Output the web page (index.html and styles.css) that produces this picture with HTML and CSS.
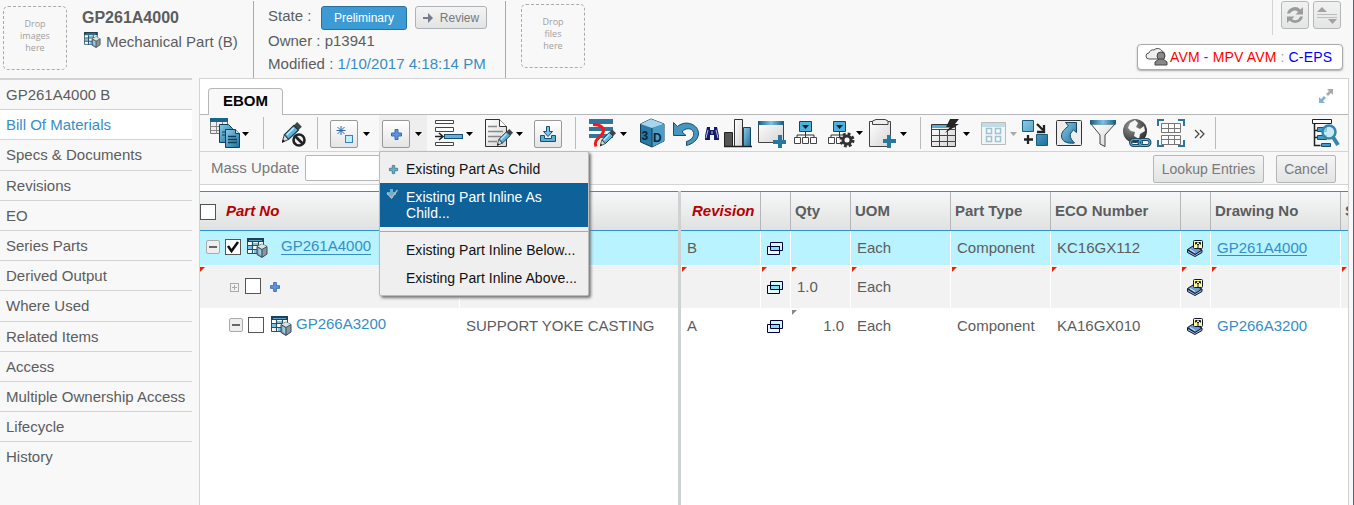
FILE: index.html
```html
<!DOCTYPE html>
<html lang="en">
<head>
<meta charset="utf-8">
<title>GP261A4000</title>
<link rel="stylesheet" href="styles.css">
</head>
<body>
<svg class="defs" width="0" height="0">
  <defs>
    <linearGradient id="blue" x1="0" y1="0" x2="1" y2="1"><stop offset="0" stop-color="#8ccbe8"/><stop offset="1" stop-color="#1d6f9d"/></linearGradient>
    <linearGradient id="bar" x1="0" y1="0" x2="1" y2="0"><stop offset="0" stop-color="#145a80"/><stop offset=".5" stop-color="#7cc4e6"/><stop offset="1" stop-color="#145a80"/></linearGradient>
    <linearGradient id="paper" x1="0" y1="0" x2="1" y2="1"><stop offset="0" stop-color="#fff"/><stop offset="1" stop-color="#d4d4d4"/></linearGradient>
    <radialGradient id="globe" cx=".35" cy=".3" r=".8"><stop offset="0" stop-color="#999"/><stop offset="1" stop-color="#222"/></radialGradient>
    <symbol id="part" viewBox="0 0 21 20"><path d="M.5 .5h16v15H.5z" fill="#fff" stroke="#234f68"/><path d="M0 0h17v4H0z" fill="#1d4256"/><path d="M2 2.500h13" stroke="#58a6cc"/><path d="M1 8h5v3H1zM6 5h5v2H6zM7 12h4v3H7z" fill="#7cc4e6"/><path d="M5.500 4v12M11.500 4v12M0 7.500h17M0 11.500h17" stroke="#234f68" stroke-width="1.200"/><path d="M15 6l5 2.500v7.500l-5 3.500-5-3V8.500z" fill="#8b959b" stroke="#3d4b53"/><path d="M10 8.500L15 6l5 2.500-5 3z" fill="#d7e2e7"/><path d="M11.500 10.500l3 1.500v5.500l-3-2z" fill="#8fd0ee"/><path d="M10 8.500l5 3 5-3M15 11.500v7.500" fill="none" stroke="#3d4b53"/></symbol>
    <symbol id="plus" viewBox="0 0 11 11"><path d="M4 .5h3V4h3.500v3H7v3.500H4V7H.5V4H4z" fill="#5f93e0" stroke="#3c68ac"/></symbol>
    <symbol id="pop" viewBox="0 0 17 14"><path d="M4.500 .5h12v8h-12z" fill="#cff8ff" stroke="#000033"/><path d="M1.500 4.500h12v8h-12z" fill="#e4fbff" stroke="#000033"/><path d="M5 5h8v3H5z" fill="#7fe0ff"/><path d="M4.500 4v4.500H14M4.500 4.500h9v4" fill="none" stroke="#000033"/></symbol>
    <symbol id="book" viewBox="0 0 17 17"><path d="M0.500 9.500L6 6l9 4-6 5z" fill="#6c9bd2" stroke="#101830"/><path d="M.5 10v2.500L8 16.500l7-4V10l-7 4.500z" fill="#8fb4e0" stroke="#101830"/><path d="M3 9.500l5 3" stroke="#def"/><rect x="6.500" y=".5" width="9" height="8" rx="1" fill="#fff899" stroke="#101830"/><path d="M8.500 4.500v-2h2M13.500 4.500v-2h-2M9 3l2 2 2-2M11 5v3" fill="none" stroke="#101830"/></symbol>
    <symbol id="pencil" viewBox="0 0 18 18"><path d="M13 0l4 4-3 3-4-4z" fill="#444"/><path d="M10 3l4 4-8.500 8L2 11z" fill="#5fb2da" stroke="#163746"/><path d="M10 5l-6 6" stroke="#bce5f5" stroke-width="1.500"/><path d="M2 11l3.500 4L0 17.500z" fill="#ddd" stroke="#333" stroke-width=".8"/><path d="M1 15l-1 2.500 2.500-1z" fill="#111"/></symbol>
  </defs>
</svg>

<div class="app">
  <header class="header">
    <div class="identity">
      <div class="drop drop-image">Drop<br>images<br>here</div>
      <div class="title">
        <h1>GP261A4000</h1>
        <p><svg class="type-icon"><use href="#part"/></svg>Mechanical Part (B)</p>
      </div>
    </div>
    <div class="facts">
      <div class="state-row"><span>State :</span><button class="state current">Preliminary</button><button class="state next"><svg width="12" height="10"><path d="M0 5h6" stroke="#777b8b" stroke-width="2"/><path d="M5 0l5 5-5 5z" fill="#777b8b"/></svg>Review</button></div>
      <div class="fact">Owner : p13941</div>
      <div class="fact modified">Modified : <a>1/10/2017 4:18:14 PM</a></div>
    </div>
    <div class="drop drop-file">Drop<br>files<br>here</div>
    <div class="header-right">
      <div class="tools">
        <button class="tool"><svg width="26" height="26"><path d="M5 11.500a8 8 0 0 1 13.500-4L21 5v7.500h-7.500L16 10a5 5 0 0 0-8 1.500zM21 14.500a8 8 0 0 1-13.500 4L5 21v-6.500h7.500L10 17a5 5 0 0 0 8-2.500z" fill="#9b9b9b"/></svg></button>
        <button class="tool"><svg width="26" height="26"><path d="M3 10l5-5 5 5zM14 17h9l-4.500 5z" fill="#a8a09c"/><path d="M3 12.500h20M3 15.500h20" stroke="#bdbdbd"/></svg></button>
      </div>
      <div class="context"><svg width="23" height="20"><path d="M5 12H3a3 3 0 0 1 0-6 4 4 0 0 1 5-3 5 5 0 0 1 8 1 4 4 0 0 1 2 6l-6 2z" fill="#eee" stroke="#555"/><circle cx="15" cy="9" r="4" fill="#888" stroke="#444"/><path d="M9 18v-3l4-3h4l4 3v3z" fill="#888" stroke="#444"/></svg><b>AVM - MPV AVM</b><i> : </i><em>C-EPS</em></div>
    </div>
  </header>

  <div class="body">
    <nav class="side">
      <a>GP261A4000 B</a><a class="active">Bill Of Materials</a><a>Specs &amp; Documents</a><a>Revisions</a><a>EO</a><a>Series Parts</a><a>Derived Output</a><a>Where Used</a><a>Related Items</a><a>Access</a><a>Multiple Ownership Access</a><a>Lifecycle</a><a class="last">History</a>
    </nav>
    <main class="panel">
      <div class="tabs"><span class="tab">EBOM</span><svg class="expand" width="15" height="15"><path d="M8 0h6v6l-2-2-3 3-2-2 3-3z" fill="#aaa"/><path d="M6 14H0V8l2 2 3-3 2 2-3 3z" fill="#85b2d0"/></svg></div>
      <div class="toolbar">
        <svg viewBox="0 0 32 36"><path d="M.5 3.500h17v15H.5z" fill="#eee" stroke="#777"/><path d="M0 3h18v4H0z" fill="#17658c"/><path d="M6.500 7v12M12.500 7v12M0 11.500h18M0 15.500h18" stroke="#888"/><path d="M9.500 9.500h9l4 4v14h-13z" fill="url(#blue)" stroke="#113f59"/><path d="M12 17h4M12 20h4" stroke="#113f59"/><path d="M15.500 14.500h10l4 4v14h-14z" fill="url(#blue)" stroke="#113f59"/><path d="M25.500 14.500v4h4" fill="#cfeaf5" stroke="#113f59"/><path d="M18 21.500h8M18 24.500h9M18 27.500h9" stroke="#113f59" stroke-width="1.500"/></svg>
        <span class="caret"></span><span class="sep"></span>
        <svg viewBox="0 0 24 36"><use href="#pencil" x="0" y="7" width="21" height="21"/><circle cx="17" cy="25" r="5.500" fill="#eee" fill-opacity=".7" stroke="#222" stroke-width="2.600"/><path d="M13 21l8 8" stroke="#222" stroke-width="2.600"/></svg>
        <span class="sep"></span>
        <span class="btn"><svg width="26" height="26"><path d="M10 5v9M5.500 9.500h9M6.500 6l7 7M13.500 6l-7 7" stroke="#2867ae"/><rect x="14.500" y="14.500" width="7" height="7" fill="#bff0ff" stroke="#3a82b4"/></svg></span>
        <span class="caret"></span>
        <span class="open"><span class="btn"><svg width="26" height="26"><use href="#plus" x="8" y="8" width="11" height="11"/></svg></span><span class="caret"></span></span>
        <svg viewBox="0 0 29 36"><path d="M.5 5.500h18v3H.5zM.5 12.500h18v4H.5zM.5 27.500h18v3H.5z" fill="#fff" stroke="#444"/><rect x="9.500" y="19.500" width="18" height="4" fill="#5eb1df" stroke="#174f71"/><path d="M0 21.500h7M4 18l4 3.500L4 25" fill="none" stroke="#222" stroke-width="1.600"/></svg>
        <span class="caret"></span>
        <svg viewBox="0 0 29 36"><path d="M.5 4.500h14l7 7v20H.5z" fill="url(#paper)" stroke="#333"/><path d="M14.500 4.500v7h7" fill="#fff" stroke="#333"/><path d="M3 11.500h9M3 16.500h15M3 21.500h13M3 26.500h9" stroke="#888" stroke-width="1.500"/><use href="#pencil" x="12" y="14" width="17" height="17"/></svg>
        <span class="caret"></span>
        <span class="btn"><svg width="26" height="26"><path d="M5.500 14.500h4v3h7v-3h4v6h-15z" fill="#5faed0" stroke="#174f71"/><path d="M11.500 5.500h3v5h3L13 15.500 8.500 10.500h3z" fill="#7cc4e6" stroke="#174f71"/></svg></span>
        <span class="sep"></span>
        <svg viewBox="0 0 29 36"><path d="M0 4h24v5H0zM0 12h24v4H0zM0 19h24v4H0z" fill="#32759b"/><path d="M4 9.500c8 0 12 4 10 8-2 5-10 7-7 14" fill="none" stroke="#f21919" stroke-width="3"/><use href="#pencil" x="11" y="14" width="17" height="18"/></svg>
        <span class="caret"></span>
        <svg viewBox="0 0 25 36"><path d="M11 4l13 5v17l-12 6L.5 27V9z" fill="#267aa5" stroke="#123d53"/><path d="M.5 9L11 4l13 5-12 4z" fill="#a6d6ed"/><path d="M12 13l12-4v17l-12 6z" fill="#4b9fc7"/><path d="M12 13v19" stroke="#123d53"/><g class="cube-text"><text x="1.500" y="25">3</text><text x="13" y="27">D</text></g></svg>
        <svg viewBox="0 0 27 36"><path d="M.5 7.500l4 4C13 4 26 10 25.500 19c-.5 6-6 10-12 11.500v-4c5-1.500 8-5 7-9-1.500-5-8-5-11.500-.5l4 3.500H.5z" fill="#4796bd" stroke="#174f71"/></svg>
        <svg viewBox="0 0 16 36"><path d="M3 12h3v3h4v-3h3l2 9v4h-5v-5H6v5H1v-4z" fill="#141b66"/><path d="M4 15l-2 8M12 15l2 8M8 16v3" stroke="#b9c0f0"/></svg>
        <svg viewBox="0 0 28 36"><path d="M.5 17.500h8v14h-8z" fill="#555" stroke="#222"/><path d="M10.500 4.500h8v27h-8z" fill="url(#paper)" stroke="#333"/><path d="M19.500 12.500h7v19h-7z" fill="url(#blue)" stroke="#17455f"/><path d="M0 31.500h28" stroke="#222" stroke-width="1.500"/></svg>
        <svg viewBox="0 0 29 36"><path d="M.5 6.500h25v21H.5z" fill="url(#paper)" stroke="#444"/><path d="M0 6h26v4H0z" fill="url(#bar)"/><path d="M20 20h4v5h4v4h-4v4h-4v-4h-5v-4h5z" fill="#28779f"/></svg>
        <svg viewBox="0 0 24 36"><path d="M5.500 6.500h12v10h-12z" fill="#4fb1dd" stroke="#17455f"/><path d="M8 10h7l-3.500 4z" fill="#123"/><path d="M11.500 17v4M3 23v-3h17v3M11.500 20v3" fill="none" stroke="#333"/><path d="M.5 22.500h6v6h-6zM8.500 22.500h6v6h-6zM16.500 22.500h6v6h-6z" fill="#fff" stroke="#444"/></svg>
        <svg viewBox="0 0 27 36"><path d="M5.500 6.500h12v10h-12z" fill="#4fb1dd" stroke="#17455f"/><path d="M8 10h7l-3.500 4z" fill="#123"/><path d="M11.500 17v5M3 23v-3h14" fill="none" stroke="#333"/><path d="M.5 22.500h6v6h-6zM8.500 22.500h6v6h-6z" fill="#fff" stroke="#444"/><circle cx="19" cy="25" r="6" fill="none" stroke="#333" stroke-width="3" stroke-dasharray="2.700 2"/><circle cx="19" cy="25" r="4" fill="#fff" stroke="#333" stroke-width="3"/></svg>
        <span class="caret up"></span>
        <svg viewBox="0 0 28 36"><path d="M.5 6.500h21v25H.5z" fill="url(#paper)" stroke="#444"/><path d="M3.500 9.500V6L7 4.500h9L19 6v3.500z" fill="#eee" stroke="#444"/><path d="M18 20h4v4h5v4h-5v5h-4v-5h-4v-4h4z" fill="#28779f"/></svg>
        <span class="caret"></span><span class="sep"></span>
        <svg viewBox="0 0 29 36"><path d="M.5 9.500h24v22H.5z" fill="url(#paper)" stroke="#333"/><path d="M1 10h23v3H1z" fill="#55acd4"/><path d="M8.500 14v17M16.500 14v17M0 14.500h25M0 20.500h25M0 26.500h25" stroke="#444"/><path d="M19 4h9l-4 5h4L14 18l5-6h-4z" fill="#252525"/></svg>
        <span class="caret"></span>
        <svg viewBox="0 0 27 36" opacity=".42"><path d="M.5 7.500h24v22H.5z" fill="#eef4f7" stroke="#666"/><path d="M1 8h23v4H1z" fill="#75b8d0"/><path d="M5.500 13.500h5v5h-5zM14.500 13.500h5v5h-5zM5.500 21.500h5v5h-5zM14.500 21.500h5v5h-5z" fill="#fff" stroke="#2778a0" stroke-width="1.500"/></svg>
        <span class="caret muted"></span>
        <svg viewBox="0 0 27 36"><path d="M.5 5.500h11v11H.5zM14.500 19.500h11v11h-11z" fill="url(#blue)" stroke="#175b80"/><path d="M15 9l6 6M22 10v7h-7M6 20v9M2 24.500h9" fill="none" stroke="#222" stroke-width="2.300"/></svg>
        <svg viewBox="0 0 27 36"><rect x=".5" y="5.500" width="25" height="25" rx="1" fill="#eee" stroke="#333"/><path d="M9.500 7.500h11v10l-3-2.500c-5 4-4 8 1 13-8 1-13-2-13-7 0-4 3-7 7-10z" fill="url(#blue)" stroke="#17455f"/></svg>
        <svg viewBox="0 0 27 36"><path d="M1 9l9 11v9l5 2.500V20L25 9z" fill="url(#paper)" stroke="#444"/><path d="M0 5h26v4.500H0z" fill="url(#bar)"/></svg>
        <svg viewBox="0 0 29 36"><circle cx="12" cy="16" r="12" fill="url(#globe)"/><path d="M7 8l5-3 3 3-2 4 4 2 4-3 1 5-5 3-1 5-5-3 1-4-4-1-3-3z" fill="#f5f5f5"/><rect x="7.500" y="24.500" width="11" height="6" rx="3" fill="none" stroke="#164b69" stroke-width="3"/><rect x="16" y="24.500" width="11" height="6" rx="3" fill="none" stroke="#164b69" stroke-width="3"/><rect x="7.500" y="24.500" width="11" height="6" rx="3" fill="none" stroke="#6bb6d9"/><rect x="16" y="24.500" width="11" height="6" rx="3" fill="none" stroke="#6bb6d9"/></svg>
        <svg viewBox="0 0 29 36"><path d="M1 11V5h6M21 5h6v6M1 25v6h6M21 31h6v-6" fill="none" stroke="#2d759c" stroke-width="2"/><path d="M4.500 8.500h19v9h-19zM4.500 20.500h19v9h-19z" fill="#fff" stroke="#777"/><path d="M11.500 8v10M17.500 8v10M11.500 20v10M17.500 20v10M4 13.500h20M4 24.500h20" stroke="#777"/></svg>
        <svg viewBox="0 0 12 36"><path d="M1 15l4 4-4 4M6 15l4 4-4 4" fill="none" stroke="#444" stroke-width="1.200"/></svg>
        <span class="sep"></span>
        <svg viewBox="0 0 28 36"><path d="M.5 4.500h19v4H.5z" fill="#fff" stroke="#222"/><path d="M2.500 9v21.500h6M2.500 15.500h4M2.500 22.500h4" fill="none" stroke="#222" stroke-width="1.500"/><path d="M5.500 12.500h9v4h-9zM5.500 20.500h9v4h-9zM9.500 28.500h9v3h-9z" fill="#3f9bc9" stroke="#174f71"/><circle cx="17" cy="17" r="6.500" fill="#b7e5f3" fill-opacity=".75" stroke="#3687ad" stroke-width="2.500"/><path d="M21 22l5 8" stroke="#3687ad" stroke-width="4"/></svg>
      </div>
      <div class="mass"><label>Mass Update</label><span class="field"></span><button>Lookup Entries</button><button>Cancel</button></div>

      <div class="grid">
        <div class="pane left">
          <div class="row head"><div class="cell req"><span class="check"></span>Part No</div><div class="cell"></div></div>
          <div class="row selected"><div class="cell node n1"><span class="fold"></span><span class="check"><svg width="14" height="14"><path d="M2 6l3.500 5L12 2" fill="none" stroke="#111" stroke-width="2.500"/></svg></span><svg class="part"><use href="#part"/></svg><a class="under">GP261A4000</a></div><div class="cell"></div></div>
          <div class="row added"><div class="cell node n2 mark"><span class="fold tiny"></span><span class="check"></span><svg class="plus"><use href="#plus"/></svg></div><div class="cell"></div></div>
          <div class="row"><div class="cell node n3"><span class="fold"></span><span class="check"></span><svg class="part"><use href="#part"/></svg><a>GP266A3200</a></div><div class="cell desc">SUPPORT YOKE CASTING</div></div>
        </div>
        <div class="splitter"></div>
        <div class="pane right">
          <div class="row head"><div class="cell req">Revision</div><div class="cell"></div><div class="cell">Qty</div><div class="cell">UOM</div><div class="cell">Part Type</div><div class="cell">ECO Number</div><div class="cell"></div><div class="cell">Drawing No</div><div class="cell">S</div></div>
          <div class="row selected"><div class="cell">B</div><div class="cell"><svg class="pop"><use href="#pop"/></svg></div><div class="cell"></div><div class="cell">Each</div><div class="cell">Component</div><div class="cell">KC16GX112</div><div class="cell"><svg class="book"><use href="#book"/></svg></div><div class="cell"><a class="under">GP261A4000</a></div><div class="cell"></div></div>
          <div class="row added"><div class="cell mark"></div><div class="cell mark"><svg class="pop"><use href="#pop"/></svg></div><div class="cell mark">1.0</div><div class="cell mark">Each</div><div class="cell mark"></div><div class="cell mark"></div><div class="cell mark"><svg class="book"><use href="#book"/></svg></div><div class="cell mark"></div><div class="cell mark"></div></div>
          <div class="row"><div class="cell">A</div><div class="cell"><svg class="pop"><use href="#pop"/></svg></div><div class="cell mark old num">1.0</div><div class="cell">Each</div><div class="cell">Component</div><div class="cell">KA16GX010</div><div class="cell"><svg class="book"><use href="#book"/></svg></div><div class="cell"><a>GP266A3200</a></div><div class="cell"></div></div>
        </div>
      </div>
    </main>
  </div>

  <div class="menu">
    <div class="item"><svg width="9" height="9" viewBox="0 0 11 11"><path d="M4 .5h3V4h3.500v3H7v3.500H4V7H.5V4H4z" fill="#6aaed0" stroke="#3f7590"/></svg>Existing Part As Child</div>
    <div class="item hot"><svg width="12" height="12"><path d="M4 1h3v3h3v3H7v3H4V7H1V4h3z" fill="#6aaed0"/><path d="M1 5l4.500 5 6-8" fill="none" stroke="#b8b8b8" stroke-width="1.300"/></svg>Existing Part Inline As<br>Child...</div>
    <hr>
    <div class="item">Existing Part Inline Below...</div>
    <div class="item">Existing Part Inline Above...</div>
  </div>
</div>
</body>
</html>
```
FILE: styles.css
```css
* { box-sizing: border-box; }
body { margin: 0; background: #f8f8f8; color: #5b5d5e; font: 15px/18px "Liberation Sans", Arial, sans-serif; }
h1, p { margin: 0; }
button { font-family: inherit; padding: 0; }
svg { display: block; overflow: visible; flex: none; }
a { color: #368ec4; }
.defs { position: absolute; }
.app { position: relative; width: 1354px; height: 505px; overflow: hidden; border-right: 1px solid #566070; }

.header { display: flex; height: 78px; }
.identity { display: flex; width: 253px; padding: 6px 0 0 3px; }
.drop { flex: none; width: 64px; height: 64px; border: 1px dashed #aaa; border-radius: 5px; color: #a0a0a0; font: 9px/12px "Open Sans", "Noto Sans", sans-serif; text-align: center; padding-top: 11px; }
.title { padding: 3px 0 0 15px; }
.title h1 { font-size: 16px; line-height: 18px; }
.title p { display: flex; margin-top: 6px; white-space: nowrap; }
.type-icon { width: 17px; height: 16px; margin: -1px 5px 0 2px; }
.facts { width: 253px; margin-top: 1px; border: solid #aaa; border-width: 0 1px; padding: 5px 0 0 14px; }
.state-row { display: flex; height: 25px; white-space: nowrap; }
.state-row > span { width: 53px; padding-top: 1px; }
.state { height: 24px; border: 1px solid #aeb1b5; border-radius: 3px; background: linear-gradient(#f4f4f4, #e2e4e3); color: #77797c; font-size: 12px; }
.current { width: 86px; margin-right: 8px; border-color: #2a6f9b; background: #3c9bd5; color: #fff; }
.next { display: flex; align-items: center; justify-content: center; gap: 5px; width: 72px; height: 23px; }
.fact { margin-top: 1px; }
.modified { margin-top: 5px; letter-spacing: .03px; }
.drop-file { margin: 4px 0 0 15px; }
.header-right { display: flex; flex-direction: column; align-items: flex-end; margin-left: auto; padding-right: 10px; }
.tools { display: flex; gap: 4px; height: 35px; padding: 1px 2px 0 8px; border-left: 1px solid #d3d3d3; }
.tool { width: 28px; height: 28px; border: 1px solid #b7b7b7; border-radius: 3px; background: linear-gradient(#f1f1f1, #e4e6e5); }
.context { display: flex; align-items: center; width: 206px; height: 26px; margin-top: 9px; padding-left: 8px; border: 1px solid #aaa; border-radius: 4px; background: #fff; box-shadow: 0 1px 2px #aaa; font-size: 14px; letter-spacing: .15px; white-space: pre; }
.context svg { margin-right: 1px; }
.context b { color: red; font-weight: normal; }
.context i { color: #999; font-style: normal; }
.context em { color: blue; font-style: normal; }

.body { display: flex; height: 427px; }
.side { width: 192px; border-top: 2px solid #d3d3d3; }
.side a { display: block; height: 30.200px; padding: 6px 0 0 6px; border-bottom: 1px solid #d3d3d3; color: #5b5d5e; white-space: nowrap; }
.side .active { background: #fff; color: #368ec4; }
.side .last { border: 0; }
.panel { width: 1150px; margin-left: 7px; border: solid #d3d3d3; border-width: 1px 1px 0; background: #fff; }
.tabs { display: flex; align-items: flex-end; justify-content: space-between; height: 36px; padding: 0 14px 0 8px; border-bottom: 1px solid #b4b6ba; }
.tab { width: 75px; height: 27px; margin-bottom: -1px; padding-top: 3px; border: 1px solid #b4b6ba; border-bottom: 0; border-radius: 4px 4px 0 0; background: #f8f8f8; color: #000; font-weight: bold; text-align: center; }
.expand { margin-bottom: 10px; }
.toolbar { display: grid; grid-template-columns: 32px 21px 19px 35px 13px 33px 16px 56px 31px 19px 31px 18px 41px 14px 31px 20px 33px 31px 20px 34px 36px 34px 28px 13px 31px 20px 11px 32px 18px 29px 12px 34px 34px 33px 34px 37px 21px 97px 28px; height: 37px; padding-left: 10px; border-bottom: 1px solid #d3d3d3; background: #f8f8f8; }
.toolbar > svg { height: 36px; justify-self: start; }
.cube-text { fill: #082534; font: bold 12px "Liberation Sans", Arial, sans-serif; }
.caret { width: 7px; height: 4px; margin-top: 17px; background: #000; clip-path: polygon(0 0, 100% 0, 50% 100%); }
.caret.up { margin-top: 16px; }
.caret.muted { background: #aaa; }
.sep { width: 1px; height: 32px; margin-top: 2px; background: #bbb; }
.btn { width: 28px; height: 28px; margin-top: 5px; border: 1px solid #999; border-radius: 2px; background: linear-gradient(#fff, #e4e4e4); }
.open { display: flex; gap: 5px; width: 48px; height: 36px; padding-left: 3px; background: #eee; }
.mass { display: flex; height: 33px; padding: 3px 12px 0 11px; border-bottom: 1px solid #d3d3d3; background: #f8f8f8; color: #77797c; }
.mass label { width: 94px; padding-top: 4px; }
.field { width: 150px; height: 26px; margin-right: auto; border: 1px solid #b4b6ba; border-radius: 2px; background: #fff; }
.mass button { height: 28px; width: 111px; border: 1px solid #b4b6ba; border-radius: 2px; background: linear-gradient(#f4f4f4, #e2e4e3); color: #77797c; font-size: 14px; }
.mass button + button { width: 60px; margin-left: 12px; }

.grid { display: flex; height: 320px; margin-top: 6px; }
.pane { overflow: hidden; }
.left { width: 478px; }
.right { width: 667px; }
.splitter { width: 3px; background: #ced2d3; }
.row { display: grid; height: 35px; }
.left .row { grid-template-columns: 260px 218px; }
.right .row { grid-template-columns: 80px 30px 60px 100px 100px 130px 30px 130px 7px; }
.cell { position: relative; min-width: 0; padding: 8px 0 0 6px; border-right: 1px solid #fff; white-space: nowrap; overflow: hidden; }
.left .cell:last-child, .right .cell:last-child { border-right: 0; }
.head { height: 40px; border: solid #2d92d0; border-width: 1px 0; background: linear-gradient(#f6f7f8, #e0e2e1); font-weight: bold; }
.head .cell { padding: 10px 0 0 4px; border-color: #b4b6ba; }
.head .req { color: #b80000; font-style: italic; }
.right .head .req { padding-left: 11px; }
.left .head .req { display: flex; gap: 10px; padding-left: 0; }
.selected { background: #b8f3ff; border-bottom: 1px solid #fff; }
.added { height: 42px; background: #f2f2f2; }
.added .cell { padding-top: 12px; }
.right .row:last-child .cell { padding-top: 9px; }
.under { display: inline-block; height: 17px; border-bottom: 1px solid #368ec4; line-height: 18px; }
.mark::before { content: ""; position: absolute; left: 1px; top: 1px; width: 5px; height: 5px; background: #ee2200; clip-path: polygon(0 0, 100% 0, 0 100%); }
.left .mark::before { left: 0; }
.mark.old::before { background: #888; top: 2px; }
.num { text-align: right; padding-right: 6px; }
.check { flex: none; width: 16px; height: 16px; border: 1px solid #555; background: #fff; }
.head .check { margin-top: 2px; }
.node { display: flex; }
.node .check { margin: 0 0 0 5px; }
.fold { flex: none; width: 14px; height: 14px; margin-top: 1px; border: 1px solid #aaa; border-radius: 2px; background: linear-gradient(#666, #666) center / 8px 2px no-repeat, #eee; }
.fold.tiny { width: 9px; height: 9px; margin-top: 5px; border-radius: 0; background: linear-gradient(#aaa, #aaa) center / 5px 1px no-repeat, linear-gradient(#aaa, #aaa) center / 1px 5px no-repeat; }
.part { width: 21px; height: 20px; margin: -1px 0 0 6px; }
.part + a { margin: -2px 0 0 13px; }
.n1 .part + a { height: 18px; }
.n2.node { padding-left: 30px; }
.n2 .check { margin-left: 6px; }
.n2 .plus { width: 10px; height: 10px; margin: 4px 0 0 9px; }
.n3.node { padding: 9px 0 0 29px; }
.n3 .part { margin-left: 7px; }
.n3 .part + a { margin-left: 4px; }
.desc { padding-top: 9px; }
.pop { width: 17px; height: 14px; margin: 3px 0 0 -1px; }
.book { width: 17px; height: 17px; margin-top: 1px; }

.menu { position: absolute; left: 379px; top: 151px; width: 210px; height: 145px; padding-top: 4px; border: 1px solid #bbb; border-radius: 2px; background: #efefef; box-shadow: 2px 2px 3px #777; color: #111; font-size: 14px; line-height: 16px; letter-spacing: .02px; }
.item { position: relative; height: 28px; padding: 5px 0 0 26px; white-space: nowrap; }
.item svg { position: absolute; left: 9px; top: 9px; }
.hot { height: 44px; padding-top: 6px; margin-top: -1px; background: #0e6299; color: #fff; }
.hot svg { left: 6px; top: 5px; }
.menu hr { height: 1px; margin: 4px 0 5px; border: 0; background: #aaa; }
```
